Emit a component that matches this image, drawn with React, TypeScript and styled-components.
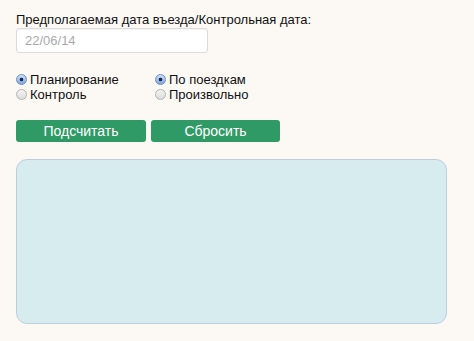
import React from "react";
import styled, { createGlobalStyle } from "styled-components";

const Global = createGlobalStyle`
  html, body { margin: 0; padding: 0; background: #fcf9f5; }
  body { font-family: "Liberation Sans", Arial, sans-serif; color: #111; }
`;

const Page = styled.div`
  width: 474px;
  height: 341px;
  box-sizing: border-box;
  padding: 12px 0 0 16px;
  display: flex;
  flex-direction: column;
`;

const Label = styled.div`
  font-size: 13px;
  line-height: 15px;
`;

const DateInput = styled.input`
  margin-top: 1px;
  width: 192px;
  height: 25px;
  box-sizing: border-box;
  border: 1px solid #dcdcdc;
  border-radius: 3px;
  background: #fff;
  box-shadow: inset 0 1px 2px rgba(0,0,0,0.06);
  padding: 0 8px;
  font-family: "Liberation Sans", Arial, sans-serif;
  font-size: 13px;
  color: #aaa;
  outline: none;
  &::placeholder { color: #aaa; }
`;

const RadioGrid = styled.div`
  margin-top: 19px;
  display: grid;
  grid-template-columns: 139px auto;
  grid-auto-rows: 15px;
`;

const RadioItem = styled.label`
  display: flex;
  align-items: center;
  gap: 3px;
  font-size: 13px;
  line-height: 15px;
`;

const Dot = styled.span<{ $on: boolean }>`
  width: 11px;
  height: 11px;
  border-radius: 50%;
  box-sizing: border-box;
  border: 1px solid ${p => (p.$on ? "#6b8fc4" : "#b4b4b4")};
  background: ${p =>
    p.$on
      ? "radial-gradient(circle at 50% 50%, #1b2a4a 0 1.6px, transparent 2.1px), linear-gradient(#cfe0f7, #7fa6dc)"
      : "linear-gradient(#f4f4f4, #dcdcdc)"};
  flex-shrink: 0;
`;

const Buttons = styled.div`
  margin-top: 18px;
  display: flex;
  gap: 5px;
`;

const Button = styled.button<{ $w: number }>`
  width: ${p => p.$w}px;
  height: 22px;
  border: none;
  border-radius: 3px;
  background: #2f9a66;
  color: #fff;
  font-family: "Liberation Sans", Arial, sans-serif;
  font-size: 14px;
  padding: 0;
`;

const ResultBox = styled.div`
  margin-top: 17px;
  width: 431px;
  height: 165px;
  box-sizing: border-box;
  border: 1px solid #bccde0;
  border-radius: 11px;
  background: #d7ecef;
`;

const radios = [
  { label: "Планирование", on: true },
  { label: "По поездкам", on: true },
  { label: "Контроль", on: false },
  { label: "Произвольно", on: false },
];

export default function App() {
  return (
    <>
      <Global />
      <Page>
        <Label>Предполагаемая дата въезда/Контрольная дата:</Label>
        <DateInput placeholder="22/06/14" />
        <RadioGrid>
          {radios.map(r => (
            <RadioItem key={r.label}>
              <Dot $on={r.on} />
              {r.label}
            </RadioItem>
          ))}
        </RadioGrid>
        <Buttons>
          <Button $w={130}>Подсчитать</Button>
          <Button $w={129}>Сбросить</Button>
        </Buttons>
        <ResultBox />
      </Page>
    </>
  );
}
